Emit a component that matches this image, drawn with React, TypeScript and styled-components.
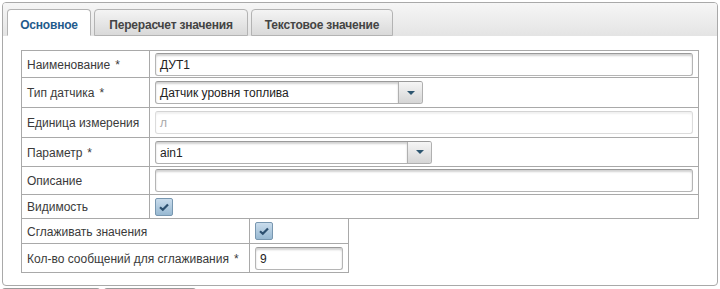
import React from 'react';
import styled, { createGlobalStyle } from 'styled-components';

const GlobalStyle = createGlobalStyle`
  html, body {
    margin: 0;
    padding: 0;
    background: #ffffff;
    overflow: hidden;
  }
  body {
    font-family: 'Liberation Sans', Arial, sans-serif;
    font-size: 12px;
    color: #333;
  }
`;

const Page = styled.div`
  padding: 2px 0 0 2px;
  width: 718px;
`;

const Panel = styled.div`
  width: 716px;
  box-sizing: border-box;
  border: 1px solid #a9a9a9;
  border-radius: 4px;
  overflow: hidden;
`;

const TabBar = styled.div`
  height: 33px;
  box-sizing: border-box;
  padding: 6px 0 0 4px;
  display: flex;
  align-items: flex-end;
  gap: 3px;
  background: linear-gradient(to bottom, #f6f6f6 0%, #e4e4e4 100%);
`;

const Tab = styled.div<{ $active?: boolean; $width: number }>`
  width: ${p => p.$width}px;
  height: 27px;
  box-sizing: border-box;
  padding-top: 4px;
  display: flex;
  align-items: center;
  justify-content: center;
  white-space: nowrap;
  border: 1px solid #b3b3b3;
  border-bottom: ${p => (p.$active ? '1px solid #fff' : '1px solid #b3b3b3')};
  border-radius: 4px 4px 0 0;
  font-weight: bold;
  font-size: 12px;
  letter-spacing: -0.2px;
  color: ${p => (p.$active ? '#1f5b8c' : '#444')};
  background: ${p =>
    p.$active ? '#ffffff' : 'linear-gradient(to bottom, #f4f4f4 0%, #d9d9d9 100%)'};
`;

const Body = styled.div`
  padding: 14px 18px 12px;
`;

const FormGrid = styled.div<{ $label: number; $width: number; $rows: string; $open?: boolean }>`
  display: grid;
  grid-template-columns: ${p => p.$label}px 1fr;
  grid-template-rows: ${p => p.$rows};
  width: ${p => p.$width}px;
  box-sizing: border-box;
  border-left: 1px solid #a9a9a9;
  border-top: ${p => (p.$open ? 'none' : '1px solid #a9a9a9')};
`;

const Cell = styled.div<{ $label?: boolean }>`
  display: flex;
  align-items: center;
  box-sizing: border-box;
  padding: ${p => (p.$label ? '1px 5px 0' : '0 5px')};
  border-right: 1px solid #a9a9a9;
  border-bottom: 1px solid #a9a9a9;
  color: #3a3a3a;
  font-size: 12px;
  white-space: nowrap;
`;

const Req = styled.span`
  margin-left: 5px;
`;

const TextInput = styled.div<{ $disabled?: boolean; $width?: number }>`
  width: ${p => (p.$width ? `${p.$width}px` : '100%')};
  height: 23px;
  box-sizing: border-box;
  padding: 1px 4px 0;
  display: flex;
  align-items: center;
  border: 1px solid ${p => (p.$disabled ? '#dcdcdc' : '#b5b5b5')};
  border-top-color: ${p => (p.$disabled ? '#d4d4d4' : '#9a9a9a')};
  border-radius: 3px;
  background: #fff;
  box-shadow: inset 0 2px 2px
    ${p => (p.$disabled ? 'rgba(0,0,0,0.06)' : 'rgba(0,0,0,0.18)')};
  color: ${p => (p.$disabled ? '#a8a8a8' : '#222')};
  font-size: 12px;
`;

const Select = styled.div<{ $width: number }>`
  width: ${p => p.$width}px;
  height: 23px;
  box-sizing: border-box;
  display: flex;
  border: 1px solid #b0b0b0;
  border-top-color: #9a9a9a;
  border-radius: 3px;
  background: #fff;
  overflow: hidden;
`;

const SelectValue = styled.div`
  flex: 1;
  display: flex;
  align-items: center;
  padding: 1px 4px 0;
  box-shadow: inset 0 2px 2px rgba(0, 0, 0, 0.18);
  color: #222;
  font-size: 12px;
`;

const SelectButton = styled.div`
  width: 23px;
  display: flex;
  align-items: center;
  justify-content: center;
  border-left: 1px solid #b0b0b0;
  background: linear-gradient(to bottom, #f5f5f5 0%, #d6d6d6 100%);
`;

const Arrow = styled.div`
  width: 0;
  height: 0;
  border-left: 4px solid transparent;
  border-right: 4px solid transparent;
  border-top: 4px solid #2e5670;
`;

const Check = styled.div`
  width: 18px;
  height: 18px;
  box-sizing: border-box;
  border: 1px solid #7897b0;
  border-radius: 2px;
  background: linear-gradient(to bottom, #c9dcec 0%, #98b9d2 100%);
  display: flex;
  align-items: center;
  justify-content: center;
`;

const Footer = styled.div`
  display: flex;
  gap: 4px;
  margin-top: 2px;
`;

const FooterButton = styled.div<{ $width: number }>`
  width: ${p => p.$width}px;
  height: 2px;
  border-top: 1px solid #9a9a9a;
  border-radius: 3px 3px 0 0;
  background: #d4d4d4;
`;

const CheckBox = () => (
  <Check>
    <svg width="12" height="10" viewBox="0 0 12 10">
      <path d="M2 5.2 L4.8 7.8 L10 2.4" fill="none" stroke="#2d5070" strokeWidth="2.2" />
    </svg>
  </Check>
);

const Dropdown = ({ value, width }: { value: string; width: number }) => (
  <Select $width={width}>
    <SelectValue>{value}</SelectValue>
    <SelectButton>
      <Arrow />
    </SelectButton>
  </Select>
);

export default function App() {
  return (
    <Page>
      <GlobalStyle />
      <Panel>
        <TabBar>
          <Tab $active $width={84}>Основное</Tab>
          <Tab $width={154}>Перерасчет значения</Tab>
          <Tab $width={142}>Текстовое значение</Tab>
        </TabBar>
        <Body>
          <FormGrid $label={128} $width={678} $rows="27px 30px 30px 29px 28px 24px">
            <Cell $label>
              Наименование<Req>*</Req>
            </Cell>
            <Cell>
              <TextInput>ДУТ1</TextInput>
            </Cell>
            <Cell $label>
              Тип датчика<Req>*</Req>
            </Cell>
            <Cell>
              <Dropdown value="Датчик уровня топлива" width={268} />
            </Cell>
            <Cell $label>Единица измерения</Cell>
            <Cell>
              <TextInput $disabled>л</TextInput>
            </Cell>
            <Cell $label>
              Параметр<Req>*</Req>
            </Cell>
            <Cell>
              <Dropdown value="ain1" width={277} />
            </Cell>
            <Cell $label>Описание</Cell>
            <Cell>
              <TextInput />
            </Cell>
            <Cell $label>Видимость</Cell>
            <Cell>
              <CheckBox />
            </Cell>
          </FormGrid>
          <FormGrid $label={228} $width={328} $rows="25px 29px" $open>
            <Cell $label>Сглаживать значения</Cell>
            <Cell>
              <CheckBox />
            </Cell>
            <Cell $label>
              Кол-во сообщений для сглаживания<Req>*</Req>
            </Cell>
            <Cell>
              <TextInput $width={88}>9</TextInput>
            </Cell>
          </FormGrid>
        </Body>
      </Panel>
      <Footer>
        <FooterButton $width={98} />
        <FooterButton $width={92} />
      </Footer>
    </Page>
  );
}
